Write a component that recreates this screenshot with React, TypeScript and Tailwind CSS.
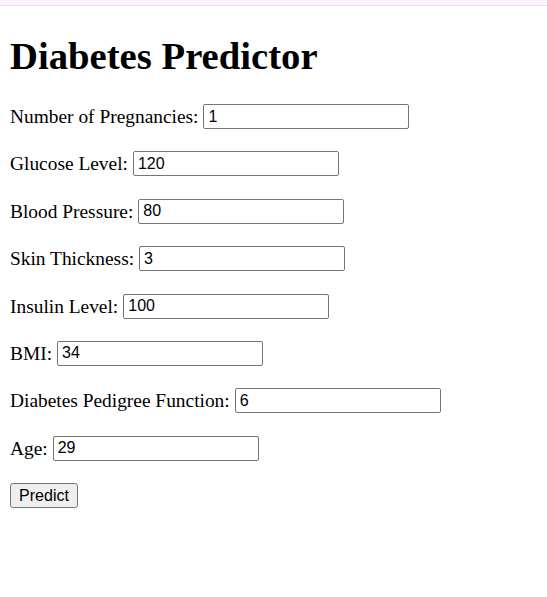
const fields = [
  { label: 'Number of Pregnancies:', value: '1' },
  { label: 'Glucose Level:', value: '120' },
  { label: 'Blood Pressure:', value: '80' },
  { label: 'Skin Thickness:', value: '3' },
  { label: 'Insulin Level:', value: '100' },
  { label: 'BMI:', value: '34' },
  { label: 'Diabetes Pedigree Function:', value: '6' },
  { label: 'Age:', value: '29' },
];

export default function App() {
  return (
    <div className="min-h-screen bg-white text-black font-['Liberation_Serif',serif]">
      <div className="h-[6px] bg-[#fdf3fd] border-b border-[#ebe1eb]" />
      <div className="px-[10px]">
        <h1 className="mt-[29px] text-[38.7px] font-bold leading-[42px]">Diabetes Predictor</h1>
        <form className="mt-[27px] flex flex-col gap-[22.4px]" onSubmit={(e) => e.preventDefault()}>
          {fields.map((f) => (
            <label key={f.label} className="flex items-center h-[25px] text-[19.4px]">
              <span>{f.label}</span>
              <input
                defaultValue={f.value}
                className="ml-[5px] w-[206px] h-[25px] px-[4px] border border-[#767676] rounded-[2px] text-[16px] font-['Liberation_Sans',sans-serif] outline-none"
              />
            </label>
          ))}
          <div className="h-[25px]">
            <button
              type="submit"
              className="w-[68px] h-[25px] bg-[#efefef] border border-[#767676] rounded-[3px] text-[16px] font-['Liberation_Sans',sans-serif]"
            >
              Predict
            </button>
          </div>
        </form>
      </div>
    </div>
  );
}
